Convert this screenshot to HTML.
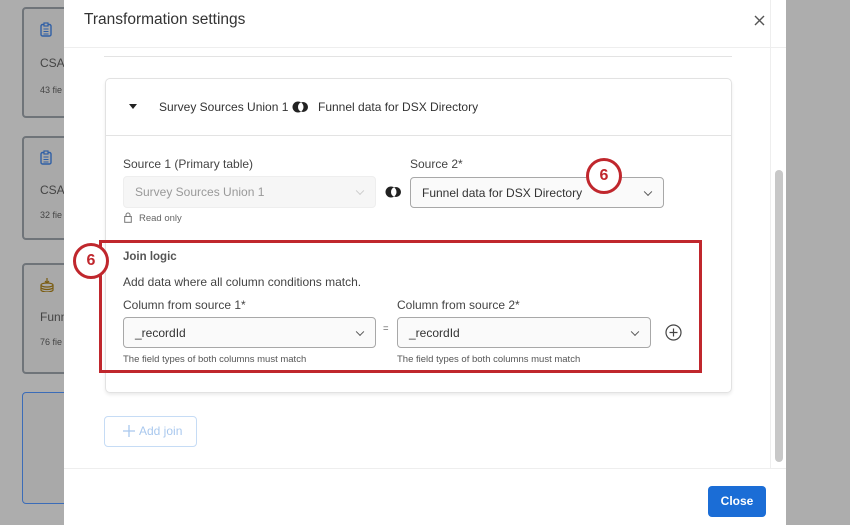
<!DOCTYPE html>
<html><head><meta charset="utf-8"><style>
*{box-sizing:border-box;margin:0;padding:0}
body{width:850px;height:525px;overflow:hidden;background:#adadad;font-family:"Liberation Sans",sans-serif;position:relative;color:#333}
.bgc{position:absolute;left:22px;width:60px;border:2px solid #6f7479;border-radius:4px;background:#a9a9a9}
.bgc span{position:absolute;left:16px;font-size:12px;color:#444}
.modal{position:absolute;left:64px;top:0;width:722px;height:525px;background:#fff}
.a{position:absolute}
.t{font-size:13px;color:#444}
.sel{position:absolute;border:1px solid #a8a8a8;border-radius:4px;background:#fafafa;font-size:12px;color:#333;padding-left:11px;display:flex;align-items:center}
.chev{position:absolute;right:12px;top:50%;width:6px;height:6px;border-right:1.3px solid #555;border-bottom:1.3px solid #555;transform:translateY(-70%) rotate(45deg)}
.badge{position:absolute;width:36px;height:36px;border:3px solid #c0272d;border-radius:50%;background:#fff;color:#c0272d;font-size:16px;font-weight:bold;text-align:center;line-height:30px}
.small{font-size:9.5px;color:#555}
</style></head><body>
<svg width="0" height="0" style="position:absolute"><defs><g id="venn"><circle cx="6" cy="6" r="5.5" fill="#222"/><circle cx="11" cy="6" r="5" fill="#222"/><path d="M9.025 1.41 A5 5 0 0 0 9.025 10.59 A5.5 5.5 0 0 0 9.025 1.41Z" fill="#fff"/></g></defs></svg>
<div class="bgc" style="top:7px;height:111px"><svg class="a" style="left:16px;top:13px" width="12" height="15" viewBox="0 0 12 15"><rect x="1" y="2.5" width="10" height="11.5" rx="1.5" fill="none" stroke="#2f5fa6" stroke-width="1.4"/><rect x="4" y="1" width="4" height="3" fill="#a9a9a9" stroke="#2f5fa6" stroke-width="1.2"/><path d="M3.5 7h5M3.5 9.5h5M3.5 12h5" stroke="#2f5fa6" stroke-width="1"/></svg><span style="top:47px">CSAT</span><span style="top:76px;font-size:9px">43 fie</span></div>
<div class="bgc" style="top:136px;height:104px"><svg class="a" style="left:16px;top:12px" width="12" height="15" viewBox="0 0 12 15"><rect x="1" y="2.5" width="10" height="11.5" rx="1.5" fill="none" stroke="#2f5fa6" stroke-width="1.4"/><rect x="4" y="1" width="4" height="3" fill="#a9a9a9" stroke="#2f5fa6" stroke-width="1.2"/><path d="M3.5 7h5M3.5 9.5h5M3.5 12h5" stroke="#2f5fa6" stroke-width="1"/></svg><span style="top:45px">CSAT</span><span style="top:72px;font-size:9px">32 fie</span></div>
<div class="bgc" style="top:263px;height:111px"><svg class="a" style="left:16px;top:12px" width="14" height="15" viewBox="0 0 14 15"><path d="M7 1v5M5 4l2 2 2-2" stroke="#7a5c10" fill="none" stroke-width="1.2"/><ellipse cx="7" cy="8" rx="6" ry="2" fill="none" stroke="#7a5c10" stroke-width="1.2"/><path d="M1 8v5c0 1 3 2 6 2s6-1 6-2V8M1 10.5c0 1 3 2 6 2s6-1 6-2" fill="none" stroke="#7a5c10" stroke-width="1.2"/></svg><span style="top:45px">Funn</span><span style="top:72px;font-size:9px">76 fie</span></div>
<div class="bgc" style="top:392px;height:112px;border:1px solid #3b6cb8;"></div>
<div class="modal">
 <div class="a" style="left:20px;top:11px;font-size:15.5px;color:#333">Transformation settings</div>
 <svg class="a" style="left:690px;top:15px" width="11" height="11"><path d="M1 1L10 10M10 1L1 10" stroke="#555" stroke-width="1.4"/></svg>
 <div class="a" style="left:0;top:47px;width:722px;border-top:1px solid #eee"></div>
 <div class="a" style="left:40px;top:56px;width:628px;border-top:1px solid #e3e3e3"></div>
 <div class="a" style="left:41px;top:78px;width:627px;height:315px;border:1px solid #e2e2e2;border-radius:5px;box-shadow:0 2px 3px rgba(0,0,0,.08)">
  <div class="a" style="left:0;top:0;width:625px;height:57px;border-bottom:1px solid #e3e3e3"></div>
  <div class="a" style="left:23px;top:25px;width:0;height:0;border-left:4px solid transparent;border-right:4px solid transparent;border-top:5px solid #222"></div>
  <div class="a t" style="left:53px;top:21px;font-size:12px;color:#333">Survey Sources Union 1</div>
  <svg class="a" style="left:186px;top:22px" width="17" height="12"><use href="#venn"/></svg>
  <div class="a t" style="left:212px;top:21px;font-size:12px;color:#333">Funnel data for DSX Directory</div>
 </div>
 <div class="a t" style="left:59px;top:157px;font-size:12px">Source 1 (Primary table)</div>
 <div class="sel" style="left:59px;top:176px;width:253px;height:32px;border-color:#eee;background:#f6f6f6;color:#999">Survey Sources Union 1<i class="chev" style="border-color:#ccc"></i></div>
 <svg class="a" style="left:60px;top:212px" width="8" height="11"><rect x="0.7" y="4.5" width="6.6" height="5.8" fill="none" stroke="#777"/><path d="M2 4.5V3a2 2 0 0 1 4 0v1.5" fill="none" stroke="#777"/></svg>
 <div class="a small" style="left:75px;top:213px;color:#666">Read only</div>
 <svg class="a" style="left:321px;top:186px" width="17" height="12"><use href="#venn"/></svg>
 <div class="a t" style="left:346px;top:157px;font-size:12px">Source 2*</div>
 <div class="sel" style="left:346px;top:177px;width:254px;height:31px">Funnel data for DSX Directory<i class="chev"></i></div>
 <div class="badge" style="left:522px;top:158px">6</div>
 <div class="a" style="left:35px;top:240px;width:603px;height:133px;border:3px solid #c0272d"></div>
 <div class="badge" style="left:9px;top:243px">6</div>
 <div class="a t" style="left:59px;top:251px;font-size:11.5px;font-weight:bold;color:#555">Join logic</div>
 <div class="a t" style="left:59px;top:275px;font-size:12px">Add data where all column conditions match.</div>
 <div class="a t" style="left:59px;top:298px;font-size:12px">Column from source 1*</div>
 <div class="sel" style="left:59px;top:317px;width:253px;height:31px">_recordId<i class="chev"></i></div>
 <div class="a small" style="left:319px;top:323px">=</div>
 <div class="a small" style="left:59px;top:354px">The field types of both columns must match</div>
 <div class="a t" style="left:333px;top:298px;font-size:12px">Column from source 2*</div>
 <div class="sel" style="left:333px;top:317px;width:254px;height:31px">_recordId<i class="chev"></i></div>
 <div class="a small" style="left:333px;top:354px">The field types of both columns must match</div>
 <svg class="a" style="left:601px;top:324px" width="17" height="17"><circle cx="8.5" cy="8.5" r="7.5" fill="none" stroke="#444" stroke-width="1.2"/><path d="M8.5 4.5v8M4.5 8.5h8" stroke="#444" stroke-width="1.2"/></svg>
 <div class="a" style="left:40px;top:416px;width:93px;height:31px;border:1px solid #c6dcf5;border-radius:4px;color:#a9c8ee;font-size:12px;line-height:29px;padding-left:34px">Add join</div>
 <svg class="a" style="left:59px;top:425px" width="12" height="12"><path d="M6 0v12M0 6h12" stroke="#a9c8ee" stroke-width="1.3"/></svg>
 <div class="a" style="left:706px;top:0;height:468px;border-left:1px solid #eee"></div>
 <div class="a" style="left:711px;top:170px;width:8px;height:292px;background:#c8c8c8;border-radius:4px"></div>
 <div class="a" style="left:0;top:468px;width:722px;border-top:1px solid #eee"></div>
 <div class="a" style="left:644px;top:486px;width:58px;height:31px;background:#1b6dd6;border-radius:4px;color:#fff;font-size:12px;font-weight:bold;text-align:center;line-height:31px">Close</div>
</div>
</body></html>
